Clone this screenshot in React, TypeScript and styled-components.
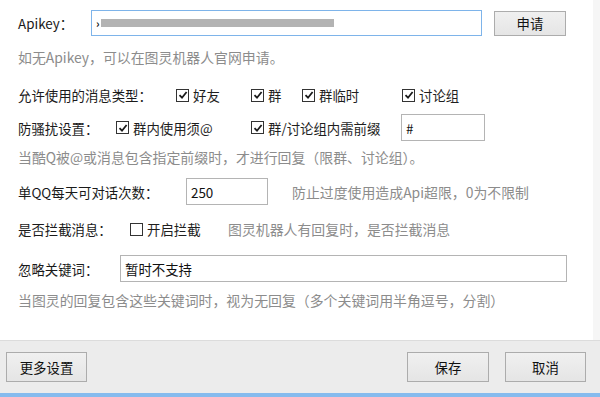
import React from "react";
import styled, { createGlobalStyle } from "styled-components";

const GlobalStyle = createGlobalStyle`
  html, body {
    margin: 0;
    padding: 0;
    background: #ffffff;
  }
  body {
    font-family: "Noto Sans CJK SC", "Noto Sans", "Liberation Sans", sans-serif;
    font-size: 13.4px;
    color: #1e1e1e;
  }
`;

const CheckMark = () => (
  <svg width="10" height="10" viewBox="0 0 10 10">
    <path d="M1.5 5.2 L4 7.7 L8.6 2" fill="none" stroke="#1a1a1a" strokeWidth="1.8" />
  </svg>
);

const Check: React.FC<{ checked?: boolean; label: string; w?: number }> = ({ checked, label, w }) => (
  <CheckItem $w={w}>
    <Box>{checked && <CheckMark />}</Box>
    <span>{label}</span>
  </CheckItem>
);

export default function App() {
  return (
    <>
      <GlobalStyle />
      <Window>
        <Body>
          <Main>
            <Row $h={26}>
              <Label $w={73}>Apikey：</Label>
              <Field $w={391} $focus>
                <Caret>›</Caret>
                <Masked />
              </Field>
              <Button $w={72} $h={25} $ml={12}>申请</Button>
            </Row>
            <Hint $mt={11}>如无Apikey，可以在图灵机器人官网申请。</Hint>

            <Row $h={26} $mt={15}>
              <Label $w={158}>允许使用的消息类型：</Label>
              <Check checked label="好友" w={75} />
              <Check checked label="群" w={51} />
              <Check checked label="群临时" w={100} />
              <Check checked label="讨论组" />
            </Row>

            <Row $h={27} $mt={6}>
              <Label $w={98}>防骚扰设置：</Label>
              <Check checked label="群内使用须@" w={135} />
              <Check checked label="群/讨论组内需前缀" w={150} />
              <Field $w={84}>#</Field>
            </Row>
            <Hint $mt={6}>当酷Q被@或消息包含指定前缀时，才进行回复（限群、讨论组）。</Hint>

            <Row $h={27} $mt={11}>
              <Label $w={168}>单QQ每天可对话次数：</Label>
              <Field $w={82}>250</Field>
              <InlineHint $ml={24}>防止过度使用造成Api超限，0为不限制</InlineHint>
            </Row>

            <Row $h={24} $mt={12}>
              <Label $w={112}>是否拦截消息：</Label>
              <Check label="开启拦截" w={98} />
              <InlineHint>图灵机器人有回复时，是否拦截消息</InlineHint>
            </Row>

            <Row $h={27} $mt={14}>
              <Label $w={102}>忽略关键词：</Label>
              <Field $w={447}>暂时不支持</Field>
            </Row>
            <Hint $mt={8}>当图灵的回复包含这些关键词时，视为无回复（多个关键词用半角逗号，分割）</Hint>
          </Main>
          <Gutter />
        </Body>

        <Footer>
          <Button $w={81} $h={30}>更多设置</Button>
          <FooterRight>
            <Button $w={82} $h={30}>保存</Button>
            <Button $w={81} $h={30}>取消</Button>
          </FooterRight>
        </Footer>
        <AccentBar />
      </Window>
    </>
  );
}

const Window = styled.div`
  width: 600px;
  height: 397px;
  display: flex;
  flex-direction: column;
  overflow: hidden;
`;

const Body = styled.div`
  flex: 1;
  display: flex;
`;

const Main = styled.div`
  flex: 1;
  display: flex;
  flex-direction: column;
  padding: 10px 0 0 18px;
`;

const Gutter = styled.div`
  width: 7px;
  background: #f6f6f6;
`;

const Row = styled.div<{ $h: number; $mt?: number }>`
  display: flex;
  align-items: center;
  height: ${(p) => p.$h}px;
  margin-top: ${(p) => p.$mt ?? 0}px;
  white-space: nowrap;
`;

const Label = styled.div<{ $w: number }>`
  width: ${(p) => p.$w}px;
  flex-shrink: 0;
  color: #1a1a1a;
`;

const Hint = styled.div<{ $mt: number }>`
  height: 20px;
  line-height: 20px;
  margin-top: ${(p) => p.$mt}px;
  font-size: 13.9px;
  color: #8c8c8c;
  white-space: nowrap;
`;

const InlineHint = styled.span<{ $ml?: number }>`
  margin-left: ${(p) => p.$ml ?? 0}px;
  font-size: 13.9px;
  color: #8c8c8c;
`;

const Field = styled.div<{ $w: number; $focus?: boolean }>`
  box-sizing: border-box;
  width: ${(p) => p.$w}px;
  height: 100%;
  flex-shrink: 0;
  display: flex;
  align-items: center;
  padding-left: 4px;
  background: #fff;
  border: 1px solid ${(p) => (p.$focus ? "#7eb4ea" : "#b4b4b4")};
  color: #111;
`;

const Caret = styled.span`
  font-size: 11px;
  font-weight: bold;
  margin-right: 1px;
`;

const Masked = styled.div`
  width: 233px;
  height: 8px;
  background: #b3b3b3;
`;

const CheckItem = styled.div<{ $w?: number }>`
  display: flex;
  align-items: center;
  width: ${(p) => (p.$w ? `${p.$w}px` : "auto")};
  flex-shrink: 0;
  gap: 4px;
`;

const Box = styled.span`
  box-sizing: border-box;
  width: 13px;
  height: 13px;
  border: 1px solid #333;
  background: #fff;
  display: flex;
  align-items: center;
  justify-content: center;
`;

const Button = styled.div<{ $w: number; $h: number; $ml?: number }>`
  box-sizing: border-box;
  width: ${(p) => p.$w}px;
  height: ${(p) => p.$h}px;
  margin-left: ${(p) => p.$ml ?? 0}px;
  display: flex;
  align-items: center;
  justify-content: center;
  border: 1px solid #acacac;
  background: linear-gradient(#f0f0f0, #e5e5e5);
  color: #111;
  flex-shrink: 0;
`;

const Footer = styled.div`
  height: 53px;
  box-sizing: border-box;
  border-top: 1px solid #dcdcdc;
  background: #ececec;
  display: flex;
  align-items: center;
  justify-content: space-between;
  padding: 0 14px 0 6px;
`;

const FooterRight = styled.div`
  display: flex;
  gap: 16px;
`;

const AccentBar = styled.div`
  height: 4px;
  background: #86bbee;
`;
